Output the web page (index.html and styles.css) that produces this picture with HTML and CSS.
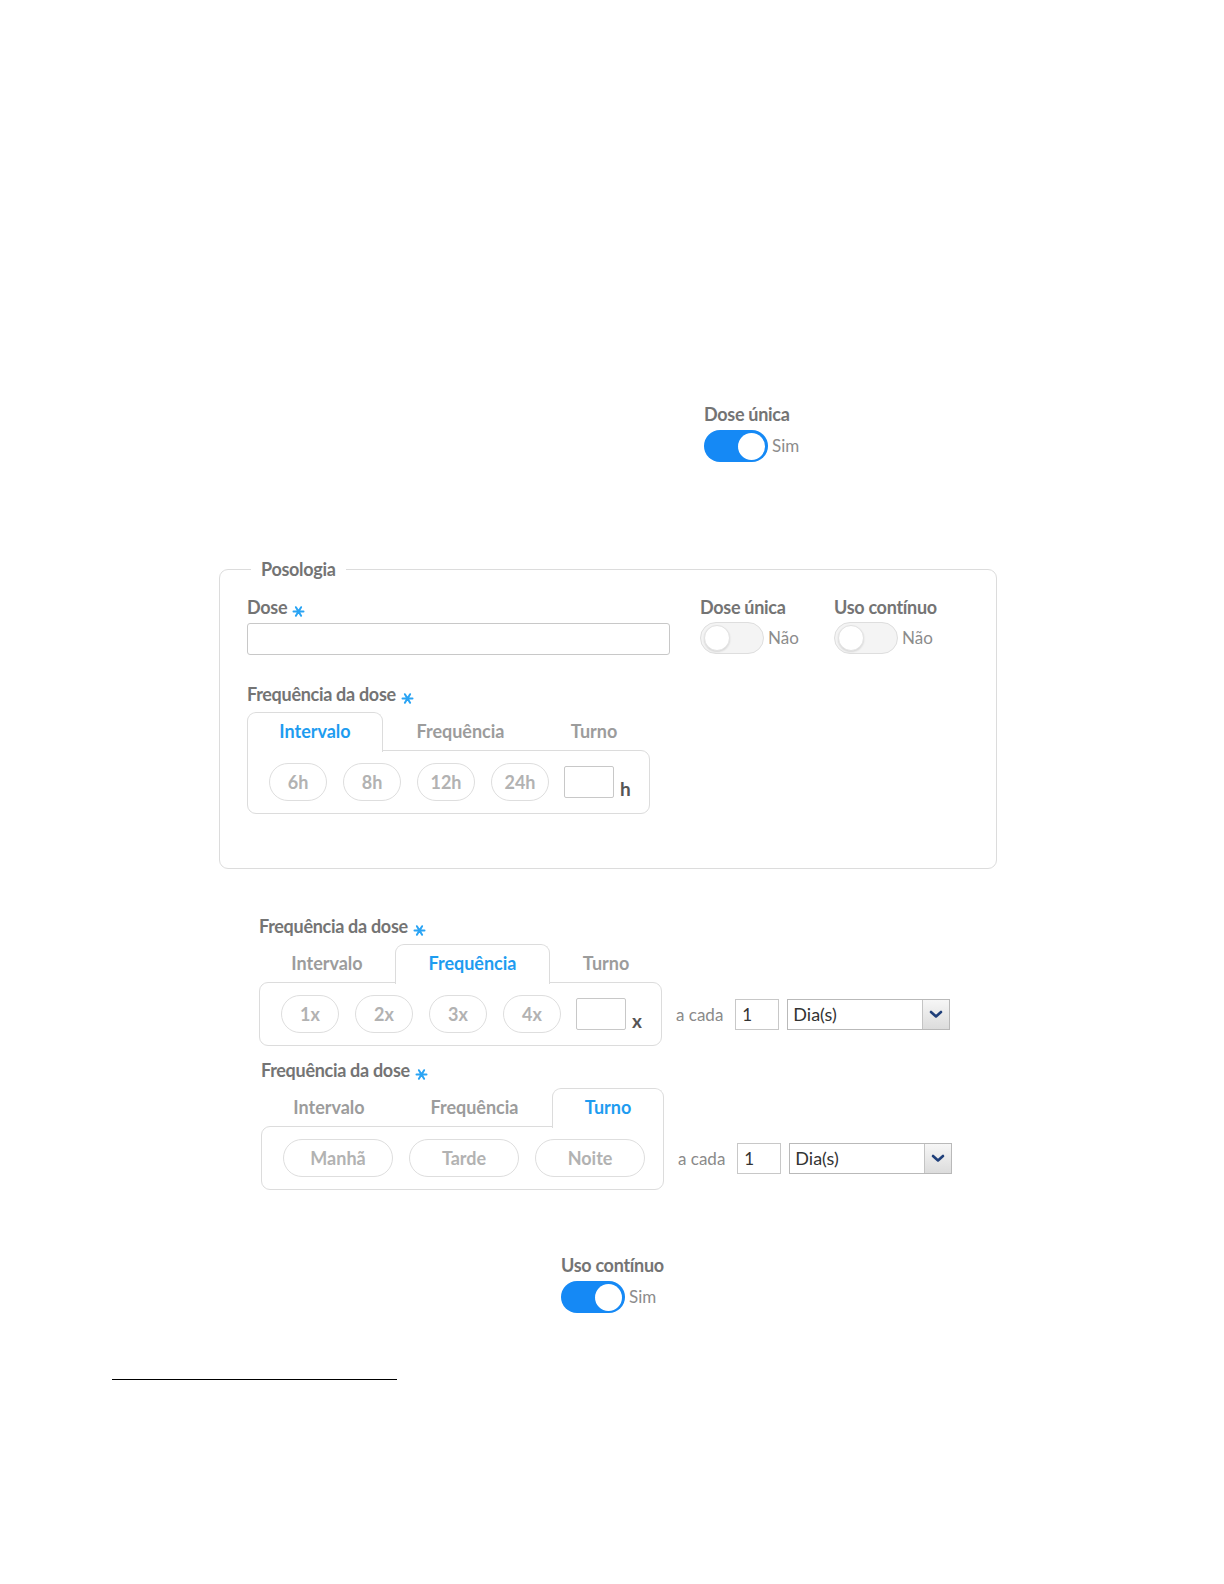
FILE: index.html
```html
<!DOCTYPE html>
<html lang="pt">
<head>
<meta charset="utf-8">
<title>Posologia</title>
<link rel="stylesheet" href="styles.css">
</head>
<body>
<div class="page">

  <div class="field solo solo-top">
    <div class="label">Dose única</div>
    <div class="switch-row">
      <span class="switch on"><span class="knob"></span></span>
      <span class="switch-text">Sim</span>
    </div>
  </div>

  <fieldset class="posologia">
    <legend>Posologia</legend>
    <div class="row">
      <div class="field dose">
        <div class="label">Dose <svg class="req" width="13" height="13" viewBox="0 0 13 13"><path d="M1.5 6.5H11.5M3.9 2.2L9.1 10.8M9.1 2.2L3.9 10.8" stroke="#2aa4f4" stroke-width="2" stroke-linecap="round"/></svg></div>
        <input class="text-input" type="text">
      </div>
      <div class="field toggle-field">
        <div class="label">Dose única</div>
        <div class="switch-row">
          <span class="switch off"><span class="knob"></span></span>
          <span class="switch-text">Não</span>
        </div>
      </div>
      <div class="field toggle-field">
        <div class="label">Uso contínuo</div>
        <div class="switch-row">
          <span class="switch off"><span class="knob"></span></span>
          <span class="switch-text">Não</span>
        </div>
      </div>
    </div>

    <div class="freq">
      <div class="label">Frequência da dose <svg class="req" width="13" height="13" viewBox="0 0 13 13"><path d="M1.5 6.5H11.5M3.9 2.2L9.1 10.8M9.1 2.2L3.9 10.8" stroke="#2aa4f4" stroke-width="2" stroke-linecap="round"/></svg></div>
      <div class="tabs">
        <div class="tab t1 active">Intervalo</div>
        <div class="tab t2">Frequência</div>
        <div class="tab t3">Turno</div>
      </div>
      <div class="panel first-active">
        <span class="pill">6h</span>
        <span class="pill">8h</span>
        <span class="pill">12h</span>
        <span class="pill">24h</span>
        <span class="mini-input"></span>
        <span class="unit">h</span>
      </div>
    </div>
  </fieldset>

  <div class="freq freq-2">
    <div class="label">Frequência da dose <svg class="req" width="13" height="13" viewBox="0 0 13 13"><path d="M1.5 6.5H11.5M3.9 2.2L9.1 10.8M9.1 2.2L3.9 10.8" stroke="#2aa4f4" stroke-width="2" stroke-linecap="round"/></svg></div>
    <div class="tabs">
      <div class="tab t1">Intervalo</div>
      <div class="tab t2 active">Frequência</div>
      <div class="tab t3">Turno</div>
    </div>
    <div class="panel-row">
      <div class="panel">
        <span class="pill">1x</span>
        <span class="pill">2x</span>
        <span class="pill">3x</span>
        <span class="pill">4x</span>
        <span class="mini-input"></span>
        <span class="unit">x</span>
      </div>
      <div class="every">
        <span class="every-text">a cada</span>
        <span class="num-input">1</span>
        <span class="select"><span class="select-value">Dia(s)</span><span class="select-btn"><svg width="14" height="9" viewBox="0 0 14 9"><path d="M2 2 L7 6.5 L12 2" fill="none" stroke="#1f3f7a" stroke-width="2.6" stroke-linecap="round" stroke-linejoin="round"/></svg></span></span>
      </div>
    </div>
  </div>

  <div class="freq freq-3">
    <div class="label">Frequência da dose <svg class="req" width="13" height="13" viewBox="0 0 13 13"><path d="M1.5 6.5H11.5M3.9 2.2L9.1 10.8M9.1 2.2L3.9 10.8" stroke="#2aa4f4" stroke-width="2" stroke-linecap="round"/></svg></div>
    <div class="tabs">
      <div class="tab t1">Intervalo</div>
      <div class="tab t2">Frequência</div>
      <div class="tab t3 active">Turno</div>
    </div>
    <div class="panel-row">
      <div class="panel last-active">
        <span class="pill wide">Manhã</span>
        <span class="pill wide">Tarde</span>
        <span class="pill wide">Noite</span>
      </div>
      <div class="every">
        <span class="every-text">a cada</span>
        <span class="num-input">1</span>
        <span class="select"><span class="select-value">Dia(s)</span><span class="select-btn"><svg width="14" height="9" viewBox="0 0 14 9"><path d="M2 2 L7 6.5 L12 2" fill="none" stroke="#1f3f7a" stroke-width="2.6" stroke-linecap="round" stroke-linejoin="round"/></svg></span></span>
      </div>
    </div>
  </div>

  <div class="field solo solo-bottom">
    <div class="label">Uso contínuo</div>
    <div class="switch-row">
      <span class="switch on"><span class="knob"></span></span>
      <span class="switch-text">Sim</span>
    </div>
  </div>

  <div class="footnote-rule"></div>
</div>
</body>
</html>
```
FILE: styles.css
```css
* { box-sizing: border-box; }
html, body { margin: 0; padding: 0; background: #fff; }
body {
  font-family: Lato, "Open Sans", "Liberation Sans", sans-serif;
  color: #777;
}
.page {
  width: 1224px;
  height: 1584px;
  padding-top: 404px;
  overflow: hidden;
}

.label {
  font-size: 18px;
  line-height: 20px;
  font-weight: 700;
  color: #747474;
  letter-spacing: -0.3px;
  white-space: nowrap;
}
.req {
  vertical-align: -4px;
  margin-left: 1px;
}

.solo { width: 200px; }
.solo-top { margin-left: 704px; }
.solo-bottom { margin-left: 561px; margin-top: 65px; }

.switch-row {
  display: flex;
  align-items: center;
  gap: 4px;
  margin-top: 6px;
}
.switch {
  display: inline-block;
  width: 64px;
  height: 32px;
  border-radius: 16px;
  position: relative;
  flex: none;
}
.switch.on { background: #1589f5; }
.switch.off {
  background: #f4f4f4;
  border: 1px solid #dedede;
}
.knob {
  position: absolute;
  width: 27px;
  height: 27px;
  border-radius: 50%;
  background: #fff;
  top: 2.5px;
}
.switch.on .knob { right: 3px; }
.switch.off .knob {
  left: 3px;
  top: 2px;
  width: 26px;
  height: 26px;
  border: 1px solid #e2e2e2;
  box-shadow: 0 1px 2px rgba(0,0,0,0.12);
}
.switch-text {
  font-size: 17px;
  color: #8c8c8c;
  line-height: 20px;
}

/* Fieldset */
.posologia {
  margin: 97px 0 0 219px;
  width: 778px;
  height: 310px;
  border: 1.5px solid #dcdcdc;
  border-radius: 9px;
  padding: 18px 20px 0 27px;
}
.posologia legend {
  font-size: 18px;
  line-height: 20px;
  font-weight: 700;
  color: #747474;
  letter-spacing: -0.3px;
  padding: 0 10px;
  margin-left: 4px;
}
.row {
  display: flex;
  align-items: flex-start;
}
.dose { width: 423px; }
.text-input {
  display: block;
  width: 423px;
  height: 32px;
  margin-top: 5px;
  border: 1px solid #c8c8c8;
  border-radius: 3px;
  background: #fff;
  font: inherit;
}
.toggle-field { margin-left: 30px; width: 104px; }
.toggle-field .switch-row { margin-top: 5px; }

.freq { margin-top: 29px; }
.freq .tabs {
  display: flex;
  margin-top: 7px;
  height: 38px;
}
.tab {
  height: 38px;
  line-height: 38px;
  text-align: center;
  font-size: 18px;
  font-weight: 700;
  color: #9c9c9c;
  letter-spacing: 0;
}
.tab.t1 { width: 136px; }
.tab.t2 { width: 155px; }
.tab.t3 { width: 112px; }
.tab.active {
  color: #1e9cf0;
  background: #fff;
  border: 1.5px solid #dcdcdc;
  border-bottom: none;
  border-radius: 9px 9px 0 0;
  position: relative;
  z-index: 1;
  height: 39.5px;
  line-height: 37px;
}
.panel {
  width: 403px;
  height: 64px;
  border: 1.5px solid #dcdcdc;
  border-radius: 9px;
  display: flex;
  align-items: center;
  gap: 16px;
  padding: 0 0 0 21px;
}
.panel.first-active { border-top-left-radius: 0; }
.panel.last-active { border-top-right-radius: 0; }
.pill {
  display: inline-flex;
  align-items: center;
  justify-content: center;
  width: 58px;
  height: 38px;
  border: 1.5px solid #dedede;
  border-radius: 19px;
  font-size: 18px;
  font-weight: 700;
  color: #b2b2b2;
  flex: none;
}
.pill.wide { width: 110px; }
.mini-input {
  width: 50px;
  height: 32px;
  border: 1px solid #c8c8c8;
  border-radius: 2px;
  margin-left: -1px;
  flex: none;
}
.unit {
  font-size: 19px;
  font-weight: 700;
  color: #555;
  margin-left: -10px;
  margin-top: 12px;
}

.freq-2 { margin-left: 259px; margin-top: 47px; }
.freq-3 { margin-left: 261px; margin-top: 14px; }
.panel-row {
  display: flex;
  align-items: center;
}
.every {
  display: flex;
  align-items: center;
  margin-left: 14px;
}
.every-text {
  font-size: 17px;
  color: #8a8a8a;
}
.num-input {
  margin-left: 12px;
  width: 44px;
  height: 31px;
  border: 1px solid #c8c8c8;
  font-size: 17px;
  color: #333;
  padding-left: 6px;
  line-height: 29px;
}
.select {
  margin-left: 8px;
  width: 163px;
  height: 31px;
  border: 1px solid #b9b9b9;
  display: flex;
  color: #333;
}
.select-value {
  flex: 1;
  font-size: 18px;
  line-height: 29px;
  padding-left: 5px;
}
.select-btn {
  width: 27px;
  border-left: 1px solid #c4c4c4;
  background: linear-gradient(#f6f6f6, #dcdcdc);
  display: flex;
  align-items: center;
  justify-content: center;
}

.footnote-rule {
  margin: 66px 0 0 112px;
  width: 285px;
  height: 1px;
  background: #000;
}
```
